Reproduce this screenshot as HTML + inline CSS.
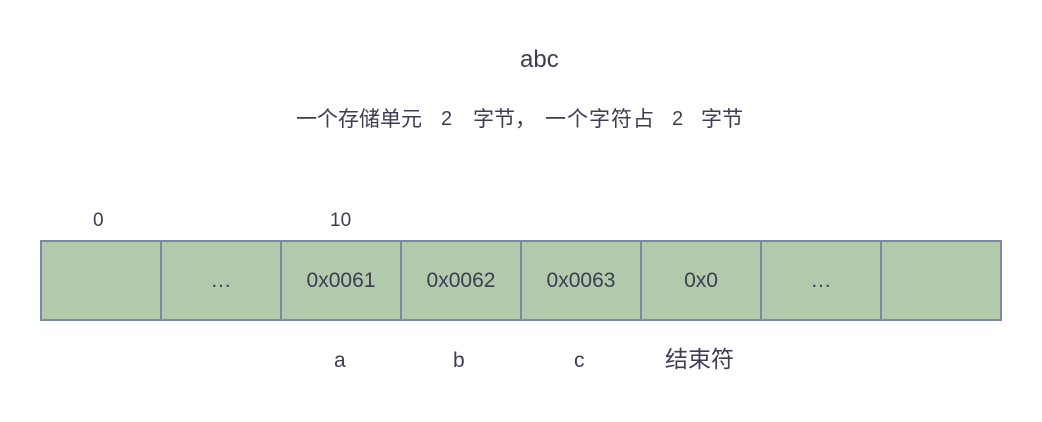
<!DOCTYPE html>
<html><head><meta charset="utf-8"><style>
body{margin:0;width:1042px;height:422px;background:#fff;position:relative;overflow:hidden;font-family:"Liberation Sans","Noto Sans CJK SC",sans-serif;color:#3d3d52}
.t{position:absolute;white-space:nowrap;line-height:1}
.h{font-size:21px;top:109px}
.c{position:absolute;top:240px;height:81px;background:#b2c9ab;border:2px solid #7b89a6;box-sizing:border-box;display:flex;align-items:center;justify-content:center;font-size:21px}
</style></head><body>
<div class="t" style="left:520px;top:48px;font-size:24px">abc</div>
<div class="t h" style="left:296px">一个存储单元</div>
<div class="t h" style="left:441px;font-size:20px">2</div>
<div class="t h" style="left:473px">字节，</div>
<div class="t h" style="left:545px;letter-spacing:1px">一个字符占</div>
<div class="t h" style="left:672px;font-size:20px">2</div>
<div class="t h" style="left:701px">字节</div>
<div class="t" style="left:93px;top:211px;font-size:19px">0</div>
<div class="t" style="left:330px;top:211px;font-size:19px">10</div>
<div class="c" style="left:40px;width:122px"></div>
<div class="c" style="left:160px;width:122px">…</div>
<div class="c" style="left:280px;width:122px">0x0061</div>
<div class="c" style="left:400px;width:122px">0x0062</div>
<div class="c" style="left:520px;width:122px">0x0063</div>
<div class="c" style="left:640px;width:122px">0x0</div>
<div class="c" style="left:760px;width:122px">…</div>
<div class="c" style="left:880px;width:122px"></div>
<div class="t" style="left:334px;top:350px;font-size:21px">a</div>
<div class="t" style="left:453px;top:350px;font-size:21px">b</div>
<div class="t" style="left:574px;top:350px;font-size:21px">c</div>
<div class="t" style="left:665px;top:348px;font-size:23px">结束符</div>
</body></html>
